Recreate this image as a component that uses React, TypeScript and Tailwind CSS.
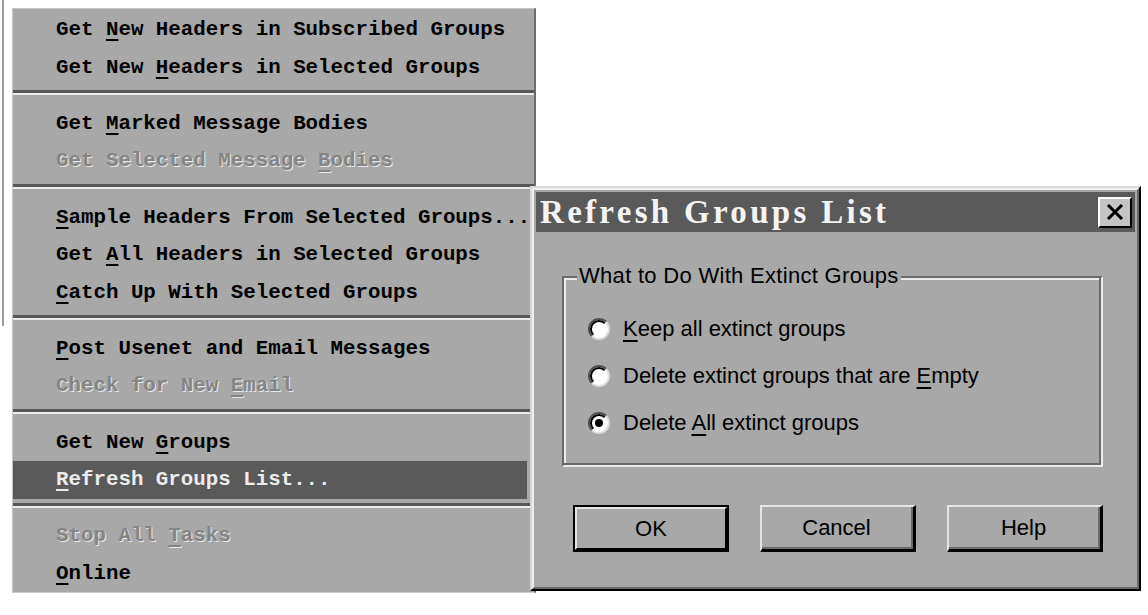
import type { ReactNode } from 'react';

type MenuItem = { label: string; key: number; disabled?: boolean; active?: boolean };

const menuGroups: MenuItem[][] = [
  [
    { label: 'Get New Headers in Subscribed Groups', key: 4 },
    { label: 'Get New Headers in Selected Groups', key: 8 },
  ],
  [
    { label: 'Get Marked Message Bodies', key: 4 },
    { label: 'Get Selected Message Bodies', key: 21, disabled: true },
  ],
  [
    { label: 'Sample Headers From Selected Groups...', key: 0 },
    { label: 'Get All Headers in Selected Groups', key: 4 },
    { label: 'Catch Up With Selected Groups', key: 0 },
  ],
  [
    { label: 'Post Usenet and Email Messages', key: 0 },
    { label: 'Check for New Email', key: 14, disabled: true },
  ],
  [
    { label: 'Get New Groups', key: 8 },
    { label: 'Refresh Groups List...', key: 0, active: true },
  ],
  [
    { label: 'Stop All Tasks', key: 9, disabled: true },
    { label: 'Online', key: 0 },
  ],
];

const options = [
  { label: 'Keep all extinct groups', key: 0, checked: false },
  { label: 'Delete extinct groups that are Empty', key: 31, checked: false },
  { label: 'Delete All extinct groups', key: 7, checked: true },
];

// underline the access-key letter
function Mnemonic({ text, at }: { text: string; at: number }) {
  return (
    <>
      {text.slice(0, at)}
      <span className="underline decoration-2 underline-offset-[4px]">{text[at]}</span>
      {text.slice(at + 1)}
    </>
  );
}

function Separator() {
  return (
    <div className="h-[18.8px] pt-[4px]">
      <div className="h-[3px] bg-[#585858]" />
      <div className="h-[2px] bg-[#ececec]" />
    </div>
  );
}

function MenuRow({ item }: { item: MenuItem }) {
  const tone = item.active
    ? 'bg-[#5a5a5a] text-[#ececec] mr-[7px]'
    : item.disabled
      ? 'text-[#858585] [text-shadow:1px_1px_0_#e8e8e8]'
      : 'text-black';
  return (
    <div className={`h-[37.5px] pl-[43px] leading-[38px] whitespace-nowrap ${tone}`}>
      <Mnemonic text={item.label} at={item.key} />
    </div>
  );
}

function Radio({ checked }: { checked: boolean }) {
  return (
    <svg width="24" height="24" viewBox="0 0 24 24" className="shrink-0">
      <circle cx="12" cy="12" r="10" fill="#fff" />
      <path d="M4.9 19.1 A10 10 0 0 1 19.1 4.9" fill="none" stroke="#505050" strokeWidth="2" />
      <path d="M6.3 17.7 A8 8 0 0 1 17.7 6.3" fill="none" stroke="#000" strokeWidth="2" />
      <path d="M19.1 4.9 A10 10 0 0 1 4.9 19.1" fill="none" stroke="#dcdcdc" strokeWidth="2" />
      {checked && <circle cx="12" cy="12" r="4" fill="#000" />}
    </svg>
  );
}

function Button({ children, isDefault }: { children: ReactNode; isDefault?: boolean }) {
  if (isDefault) {
    return (
      <div className="w-[156px] h-[47px] border-2 border-black">
        <div className="h-full border-2 border-t-[#e4e4e4] border-l-[#e4e4e4] border-r-black border-b-black flex items-center justify-center">
          {children}
        </div>
      </div>
    );
  }
  return (
    <div className="w-[156px] h-[47px] border-t-2 border-l-2 border-r-[3px] border-b-[3px] border-t-[#e4e4e4] border-l-[#e4e4e4] border-r-black border-b-black">
      <div className="h-full border-r-2 border-b-2 border-r-[#6a6a6a] border-b-[#6a6a6a] flex items-center justify-center">
        {children}
      </div>
    </div>
  );
}

export default function App() {
  return (
    <div className="relative w-[1148px] h-[615px] bg-white overflow-hidden">
      {/* edge of the window behind */}
      <div className="absolute left-[2px] top-0 w-[2px] h-[326px] bg-[#9c9c9c]" />

      {/* drop-down menu */}
      <div
        className="absolute left-[12px] top-[8px] w-[524px] bg-[#a8a8a8] border-t border-l border-[#c4c4c4] border-r-2 border-b border-r-[#6c6c6c] border-b-[#d0d0d0] pt-[2px] text-[20.8px] font-bold"
        style={{ fontFamily: '"Liberation Mono", monospace' }}
      >
        {menuGroups.map((group, gi) => (
          <div key={gi}>
            {gi > 0 && <Separator />}
            {group.map((item) => (
              <MenuRow key={item.label} item={item} />
            ))}
          </div>
        ))}
      </div>

      {/* dialog */}
      <div className="absolute left-[530px] top-[186px] w-[611px] h-[405px] bg-[#a8a8a8] border-2 border-t-[#d8d8d8] border-l-[#d8d8d8] border-r-black border-b-black">
        <div className="h-full border-2 border-t-[#efefef] border-l-[#efefef] border-r-[#6a6a6a] border-b-[#6a6a6a] p-[2px] flex flex-col">
          {/* title bar */}
          <div className="h-[40px] bg-[#5a5a5a] flex items-center justify-between pl-[4px] pr-[3px]">
            <span
              className="text-[33px] font-bold text-[#f4f4f4] tracking-[3.3px] leading-none"
              style={{ fontFamily: '"Liberation Serif", serif' }}
            >
              Refresh Groups List
            </span>
            <div className="w-[34px] h-[31px] bg-[#c4c4c4] border-2 border-t-white border-l-white border-r-black border-b-black flex items-center justify-center">
              <svg width="18" height="16" viewBox="0 0 18 16">
                <path d="M2 1 L16 15 M16 1 L2 15" stroke="#000" strokeWidth="3" />
              </svg>
            </div>
          </div>

          <div
            className="flex-1 pl-[26px] pt-[44px] text-[22px] text-black"
            style={{ fontFamily: '"Liberation Sans", Arial, sans-serif' }}
          >
            {/* group box */}
            <div className="relative h-[191px] w-[541px] border-2 border-t-[#6a6a6a] border-l-[#6a6a6a] border-r-[#ececec] border-b-[#ececec] shadow-[inset_-2px_-2px_0_#6a6a6a,inset_2px_2px_0_#ececec]">
              <span className="absolute left-[13px] -top-[15px] bg-[#a8a8a8] px-[2px] leading-[26px] tracking-[0.3px]">
                What to Do With Extinct Groups
              </span>
              <div className="pt-[27px] pl-[23px] flex flex-col">
                {options.map((o) => (
                  <div key={o.label} className="h-[47px] flex items-center gap-[12px]">
                    <Radio checked={o.checked} />
                    <span className="leading-none">
                      <Mnemonic text={o.label} at={o.key} />
                    </span>
                  </div>
                ))}
              </div>
            </div>

            {/* buttons */}
            <div className="mt-[38px] pl-[11px] flex gap-[31px]">
              <Button isDefault>OK</Button>
              <Button>Cancel</Button>
              <Button>Help</Button>
            </div>
          </div>
        </div>
      </div>
    </div>
  );
}
